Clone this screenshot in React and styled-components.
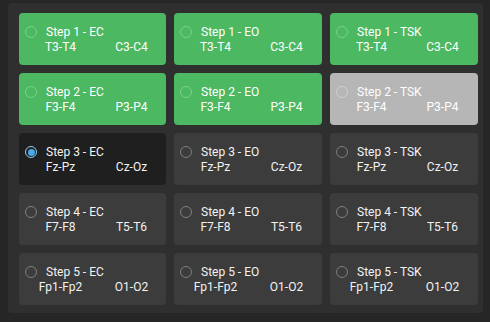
import React from "react";
import styled, { createGlobalStyle, css } from "styled-components";

const Global = createGlobalStyle`
  html, body { margin: 0; padding: 0; background: #262626; }
  body { font-family: Roboto, "Liberation Sans", sans-serif; }
`;

const Page = styled.div`
  width: 490px;
  height: 322px;
  box-sizing: border-box;
  padding: 3px 7px 0 8px;
  background: #262626;
`;

const Panel = styled.div`
  box-sizing: border-box;
  height: 310px;
  background: #2f2f2f;
  border-radius: 4px;
  padding: 10px 7px 0 11px;
  display: grid;
  grid-template-columns: 147px 148px 148px;
  grid-auto-rows: 52px;
  column-gap: 8px;
  row-gap: 8px;
`;

const variants = {
  done: css`
    background: #4cb862;
    color: #ffffff;
  `,
  muted: css`
    background: #b6b6b6;
    color: #ffffff;
  `,
  active: css`
    background: #1f1f1f;
    color: #f2f2f2;
  `,
  idle: css`
    background: #3c3c3c;
    color: #f2f2f2;
  `,
};

const Card = styled.div`
  box-sizing: border-box;
  border-radius: 4px;
  padding: 12px 0 0 6px;
  font-size: 12px;
  line-height: 15px;
  ${(p) => variants[p.$variant]}
`;

const TitleRow = styled.div`
  display: flex;
  align-items: center;
  gap: 9px;
  white-space: nowrap;
`;

const ringColors = {
  done: "#7ccf8d",
  muted: "#cfcfcf",
  active: "#8fd0f2",
  idle: "#808080",
};

const Radio = styled.span`
  box-sizing: border-box;
  width: 12px;
  height: 12px;
  border-radius: 50%;
  border: 1.5px solid ${(p) => ringColors[p.$variant]};
  display: inline-flex;
  align-items: center;
  justify-content: center;
  margin-top: -1px;
  flex: none;
  &::after {
    content: "";
    width: 7px;
    height: 7px;
    border-radius: 50%;
    background: ${(p) => (p.$variant === "active" ? "#4aa9e6" : "transparent")};
  }
`;

const Channels = styled.div`
  display: grid;
  grid-template-columns: 71px 71px;
  white-space: nowrap;
`;

const Channel = styled.span`
  text-align: center;
`;

const rows = [
  { step: 1, a: "T3-T4", b: "C3-C4" },
  { step: 2, a: "F3-F4", b: "P3-P4" },
  { step: 3, a: "Fz-Pz", b: "Cz-Oz" },
  { step: 4, a: "F7-F8", b: "T5-T6" },
  { step: 5, a: "Fp1-Fp2", b: "O1-O2" },
];
const kinds = ["EC", "EO", "TSK"];

function variantFor(step, kind) {
  if (step === 1) return "done";
  if (step === 2) return kind === "TSK" ? "muted" : "done";
  if (step === 3 && kind === "EC") return "active";
  return "idle";
}

export default function App() {
  return (
    <>
      <Global />
      <Page>
        <Panel>
          {rows.map((r) =>
            kinds.map((k) => {
              const v = variantFor(r.step, k);
              return (
                <Card key={`${r.step}-${k}`} $variant={v}>
                  <TitleRow>
                    <Radio $variant={v} />
                    <span>{`Step ${r.step} - ${k}`}</span>
                  </TitleRow>
                  <Channels>
                    <Channel>{r.a}</Channel>
                    <Channel>{r.b}</Channel>
                  </Channels>
                </Card>
              );
            })
          )}
        </Panel>
      </Page>
    </>
  );
}
